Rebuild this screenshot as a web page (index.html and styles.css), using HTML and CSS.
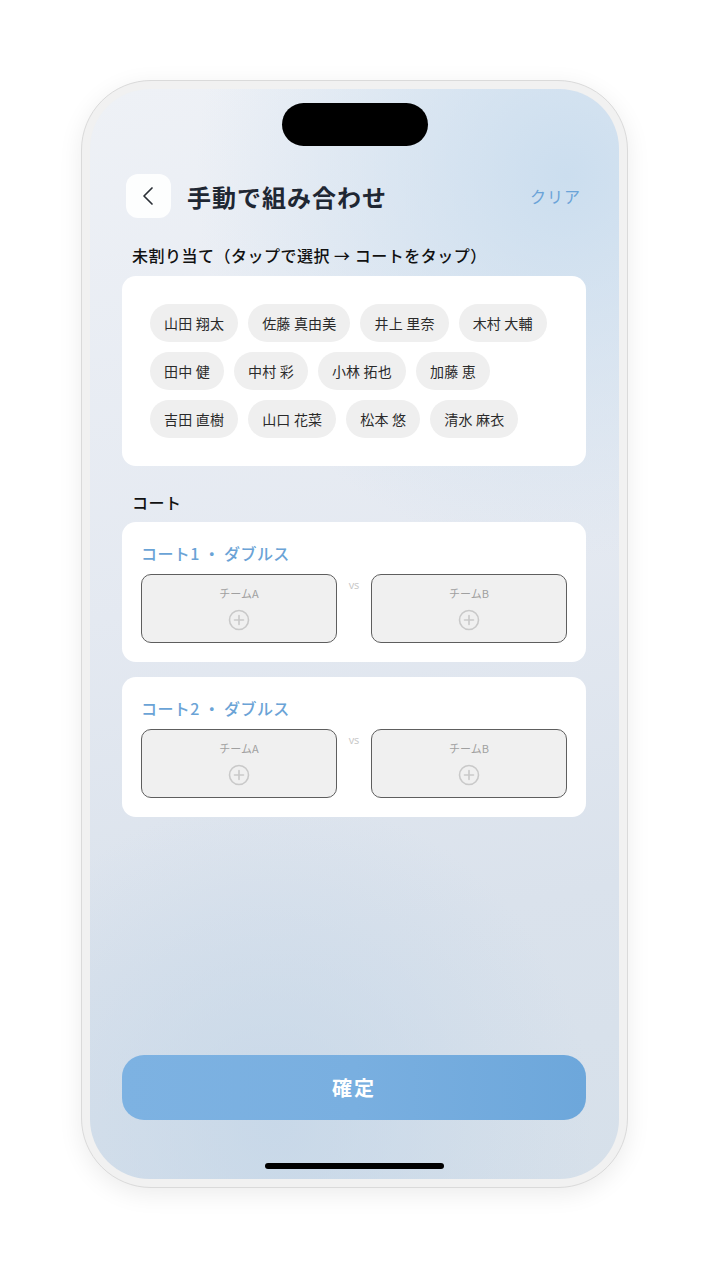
FILE: index.html
```html
<!DOCTYPE html>
<html lang="ja">
<head>
<meta charset="utf-8">
<title>手動で組み合わせ</title>
<link rel="stylesheet" href="styles.css">
</head>
<body>
<div class="stage">
  <div class="phone">
    <div class="screen">
      <div class="island"></div>
      <div class="content">
        <header class="header">
          <button class="back" aria-label="戻る">
            <svg width="20" height="20" viewBox="0 0 20 20"><path d="M13 2 L5 10 L13 18" fill="none" stroke="#2b2f36" stroke-width="1.7" stroke-linecap="round" stroke-linejoin="round"/></svg>
          </button>
          <h1 class="title">手動で組み合わせ</h1>
          <span class="clear">クリア</span>
        </header>

        <div class="label label-top">未割り当て（タップで選択 → コートをタップ）</div>
        <section class="card pool">
          <span class="chip">山田 翔太</span>
          <span class="chip">佐藤 真由美</span>
          <span class="chip">井上 里奈</span>
          <span class="chip">木村 大輔</span>
          <span class="chip">田中 健</span>
          <span class="chip">中村 彩</span>
          <span class="chip">小林 拓也</span>
          <span class="chip">加藤 恵</span>
          <span class="chip">吉田 直樹</span>
          <span class="chip">山口 花菜</span>
          <span class="chip">松本 悠</span>
          <span class="chip">清水 麻衣</span>
        </section>

        <div class="label label-court">コート</div>
        <section class="card court">
          <div class="court-title">コート1 ・ ダブルス</div>
          <div class="teams">
            <div class="team">
              <span class="team-name">チームA</span>
              <svg class="plus" width="22" height="22" viewBox="0 0 22 22"><circle cx="11" cy="11" r="9.5" fill="none" stroke="#c9c9c9" stroke-width="1.6"/><path d="M11 6.5 V15.5 M6.5 11 H15.5" stroke="#c9c9c9" stroke-width="1.6" stroke-linecap="round"/></svg>
            </div>
            <div class="vs">vs</div>
            <div class="team">
              <span class="team-name">チームB</span>
              <svg class="plus" width="22" height="22" viewBox="0 0 22 22"><circle cx="11" cy="11" r="9.5" fill="none" stroke="#c9c9c9" stroke-width="1.6"/><path d="M11 6.5 V15.5 M6.5 11 H15.5" stroke="#c9c9c9" stroke-width="1.6" stroke-linecap="round"/></svg>
            </div>
          </div>
        </section>
        <section class="card court">
          <div class="court-title">コート2 ・ ダブルス</div>
          <div class="teams">
            <div class="team">
              <span class="team-name">チームA</span>
              <svg class="plus" width="22" height="22" viewBox="0 0 22 22"><circle cx="11" cy="11" r="9.5" fill="none" stroke="#c9c9c9" stroke-width="1.6"/><path d="M11 6.5 V15.5 M6.5 11 H15.5" stroke="#c9c9c9" stroke-width="1.6" stroke-linecap="round"/></svg>
            </div>
            <div class="vs">vs</div>
            <div class="team">
              <span class="team-name">チームB</span>
              <svg class="plus" width="22" height="22" viewBox="0 0 22 22"><circle cx="11" cy="11" r="9.5" fill="none" stroke="#c9c9c9" stroke-width="1.6"/><path d="M11 6.5 V15.5 M6.5 11 H15.5" stroke="#c9c9c9" stroke-width="1.6" stroke-linecap="round"/></svg>
            </div>
          </div>
        </section>

        <button class="confirm">確定</button>
      </div>
      <div class="home"></div>
    </div>
  </div>
</div>
</body>
</html>
```

FILE: styles.css
```css
* { box-sizing: border-box; }

html, body {
  margin: 0;
  padding: 0;
  background: #ffffff;
  font-family: "Noto Sans CJK JP", "Noto Sans", sans-serif;
}

.stage {
  width: 721px;
  height: 1280px;
  padding: 80px 0 0 81px;
}

.phone {
  width: 547px;
  height: 1108px;
  border-radius: 70px;
  background: #f1f1f1;
  border: 1px solid #dadada;
  padding: 8px;
  box-shadow: 0 6px 24px rgba(0, 0, 0, 0.08);
}

.screen {
  width: 529px;
  height: 1090px;
  border-radius: 60px;
  overflow: hidden;
  display: flex;
  flex-direction: column;
  align-items: center;
  background:
    radial-gradient(ellipse 70% 35% at 90% 8%, rgba(200, 220, 238, 0.9), rgba(200, 220, 238, 0) 100%),
    radial-gradient(ellipse 60% 30% at 35% 95%, rgba(196, 214, 232, 0.8), rgba(196, 214, 232, 0) 100%),
    linear-gradient(170deg, #eef1f6 0%, #e4e9f1 45%, #dae2ec 75%, #d6e0ea 100%);
}

.island {
  width: 146px;
  height: 43px;
  margin-top: 14px;
  border-radius: 22px;
  background: #000;
  flex: none;
}

.content {
  width: 100%;
  flex: 1;
  display: flex;
  flex-direction: column;
  padding: 28px 33px 0 32px;
}

.header {
  display: flex;
  align-items: center;
  height: 44px;
  padding: 0 5px 0 4px;
}

.back {
  width: 45px;
  height: 44px;
  border: none;
  border-radius: 12px;
  background: rgba(255, 255, 255, 0.9);
  display: flex;
  align-items: center;
  justify-content: center;
  padding: 0;
  margin-right: 16px;
}

.title {
  margin: 0;
  font-size: 24px;
  font-weight: 700;
  color: #1f2733;
  letter-spacing: 1px;
  flex: 1;
}

.clear {
  font-size: 16px;
  color: #6aa3d8;
  letter-spacing: 1px;
}

.label {
  font-size: 16px;
  font-weight: 500;
  color: #111;
  line-height: 22px;
  padding-left: 10px;
  letter-spacing: 0.5px;
}

.label-top { margin-top: 26px; margin-bottom: 10px; }
.label-court { margin-top: 25px; margin-bottom: 9px; }

.card {
  background: #ffffff;
  border-radius: 14px;
}

.pool {
  padding: 28px;
  display: flex;
  flex-wrap: wrap;
  gap: 10px;
}

.chip {
  height: 38px;
  line-height: 38px;
  padding: 0 14px;
  border-radius: 19px;
  background: #efefef;
  font-size: 14px;
  color: #2a2a2a;
  white-space: nowrap;
  letter-spacing: 0.2px;
}

.court {
  padding: 19px;
  margin-bottom: 15px;
}

.court-title {
  font-size: 16px;
  font-weight: 500;
  line-height: 24px;
  color: #6aa3d6;
  margin-bottom: 9px;
  letter-spacing: 0.4px;
}

.teams {
  display: flex;
  align-items: flex-start;
}

.team {
  width: 196px;
  height: 69px;
  border: 1px solid #5e5e5e;
  border-radius: 10px;
  background: #f0f0f0;
  display: flex;
  flex-direction: column;
  align-items: center;
  padding-top: 11px;
}

.team-name {
  font-size: 11px;
  line-height: 14px;
  color: #a0a0a0;
}

.plus {
  margin-top: 9px;
}

.vs {
  width: 34px;
  text-align: center;
  font-size: 11px;
  color: #c6c6c6;
  padding-top: 3px;
  font-family: "Open Sans", sans-serif;
}

.confirm {
  margin-top: auto;
  height: 65px;
  border: none;
  border-radius: 22px;
  background: linear-gradient(90deg, #7db2e2 0%, #79afe0 50%, #6da7db 100%);
  color: #ffffff;
  font-family: "Noto Sans CJK JP", sans-serif;
  font-size: 20px;
  font-weight: 700;
  letter-spacing: 2px;
  width: 100%;
  margin-bottom: 43px;
}

.home {
  width: 179px;
  height: 6px;
  border-radius: 3px;
  background: #000;
  margin-bottom: 10px;
  flex: none;
}
```
